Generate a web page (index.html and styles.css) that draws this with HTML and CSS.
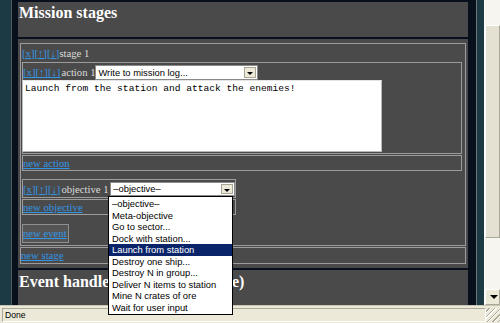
FILE: index.html
```html
<!DOCTYPE html>
<html>
<head>
    <title>Mission editor</title>
    <link rel="stylesheet" href="styles.css">
</head>
<body>
    <div class="window">
        <div class="desk">
            <div class="frame">
                <div class="panel head">
                    <h2>Mission stages</h2>
                </div>
                <div class="panel stages">
                    <div class="box stage">
                        <div class="row title"><a href="#">[x]</a><a href="#">[↑]</a><a href="#">[↓]</a>stage 1</div>
                        <div class="box action">
                            <div class="row"><a href="#">[x]</a><a href="#">[↑]</a><a href="#">[↓]</a><span class="label">action 1</span><span class="select log">Write to mission log...<span class="arrow"></span></span></div>
                            <div class="textarea">Launch from the station and attack the enemies!</div>
                        </div>
                        <div class="box bar"><a href="#">new action</a></div>
                        <div class="box objective">
                            <div class="row"><a href="#">[x]</a><a href="#">[↑]</a><a href="#">[↓]</a><span class="label">objective 1</span><span class="select goal">&ndash;objective&ndash;<span class="arrow"></span></span></div>
                        </div>
                        <div class="box bar short"><a href="#">new objective</a></div>
                        <div class="box event"><a href="#">new event</a></div>
                    </div>
                    <div class="box bar"><a href="#">new stage</a></div>
                </div>
                <div class="panel handlers">
                    <h2>Event handlers (not in any stage)</h2>
                </div>
            </div>
        </div>
        <div class="scrollbar">
            <div class="track top"></div>
            <div class="thumb"></div>
            <div class="track"></div>
            <div class="down"><span class="arrow"></span></div>
        </div>
    </div>
    <div class="status">
        <div class="status-text">Done</div>
        <div class="grip"></div>
    </div>
    <ul class="dropdown">
        <li>&ndash;objective&ndash;</li>
        <li>Meta-objective</li>
        <li>Go to sector...</li>
        <li>Dock with station...</li>
        <li class="selected">Launch from station</li>
        <li>Destroy one ship...</li>
        <li>Destroy N in group...</li>
        <li>Deliver N items to station</li>
        <li>Mine N crates of ore</li>
        <li>Wait for user input</li>
    </ul>
</body>
</html>
```

FILE: styles.css
```css
body {
    margin: 0;
    width: 500px;
    height: 323px;
    overflow: hidden;
    background-color: #ece9d8;
    font-family: "Liberation Serif", serif;
    color: #dcdcdc;
}
.window {
    display: flex;
    height: 305px;
}
.desk {
    width: 484px;
    background-color: #1c3a44;
    padding-left: 11px;
    box-sizing: border-box;
    overflow: hidden;
}
.frame {
    width: 466px;
    height: 305px;
    box-sizing: border-box;
    background-color: #08101d;
    border-left: 1px solid #4f5d63;
    border-right: 1px solid #6d767a;
    padding: 2px 8px 0 6px;
    display: flex;
    flex-direction: column;
    gap: 2px;
}
.panel {
    background-color: #4a4a4a;
}
h2 {
    margin: 0;
    font-size: 16px;
    line-height: 20px;
    font-weight: bold;
    color: #ffffff;
    padding-left: 1px;
    white-space: nowrap;
}
.head {
    height: 35px;
    box-sizing: border-box;
    padding-top: 1px;
}
.stages {
    padding: 4px 2px;
    display: flex;
    flex-direction: column;
    gap: 1px;
}
.handlers {
    flex: 1;
    padding-top: 2px;
}
.box {
    border: 1px solid #9c9c9c;
}
.stage {
    padding: 1px;
    display: flex;
    flex-direction: column;
    align-items: flex-start;
    gap: 1px;
}
a {
    color: #3196e6;
    text-decoration: underline;
}
.row {
    display: flex;
    align-items: center;
    font-size: 10.7px;
    white-space: nowrap;
}
.title {
    height: 17px;
    margin-top: -1px;
}
.label {
    margin-left: 1px;
    width: 34px;
}
.action {
    width: 440px;
    box-sizing: border-box;
    padding: 1px 0;
}
.action .row {
    height: 16px;
}
.objective {
    margin-top: 7px;
    width: 214px;
    box-sizing: border-box;
    padding: 1px 0;
}
.objective .row {
    height: 15px;
}
.objective .label {
    width: 49px;
}
.select {
    position: relative;
    display: flex;
    align-items: center;
    height: 15px;
    box-sizing: border-box;
    background-color: #ffffff;
    border: 1px solid #8a8a8a;
    color: #000000;
    font-family: "Liberation Sans", sans-serif;
    font-size: 9.4px;
    padding-left: 2px;
}
.log {
    width: 163px;
}
.goal {
    width: 125px;
    height: 14px;
}
.select .arrow {
    position: absolute;
    right: 1px;
    top: 1px;
    bottom: 1px;
    width: 12px;
    background-color: #ece9d8;
    border: 1px solid #a8a595;
    box-sizing: border-box;
}
.select .arrow::after,
.down .arrow::after {
    content: "";
    position: absolute;
    left: 2px;
    top: 4px;
    border-left: 3px solid transparent;
    border-right: 3px solid transparent;
    border-top: 3px solid #000000;
}
.textarea {
    width: 360px;
    height: 72px;
    box-sizing: border-box;
    margin-left: -1px;
    background-color: #ffffff;
    border: 1px solid #b9b9b9;
    border-top-color: #e4e4e4;
    color: #000000;
    font-family: "Liberation Mono", monospace;
    font-size: 9.6px;
    padding: 2px 2px;
}
.bar {
    width: 440px;
    box-sizing: border-box;
    height: 16px;
    font-size: 10.7px;
    line-height: 14px;
}
.stages > .bar {
    width: 446px;
    height: 17px;
    line-height: 15px;
}
.short {
    width: 214px;
}
.event {
    margin-top: 8px;
    margin-bottom: 1px;
    width: 47px;
    height: 19px;
    box-sizing: border-box;
    font-size: 10.7px;
    line-height: 15px;
    padding: 1px 0;
    border-color: #8f8f8f;
    background-color: #555555;
}
.scrollbar {
    width: 16px;
    display: flex;
    flex-direction: column;
    background-color: #f6f5f0;
    border-left: 1px solid #ffffff;
    box-sizing: border-box;
}
.track {
    flex: 1;
}
.track.top {
    flex: none;
    height: 25px;
}
.thumb {
    height: 213px;
    background-color: #e4e0d2;
    border: 1px solid #ffffff;
    border-right-color: #aca899;
    border-bottom-color: #aca899;
    box-sizing: border-box;
}
.down {
    position: relative;
    height: 16px;
    background-color: #ece9d8;
    border: 1px solid #ffffff;
    border-right-color: #aca899;
    border-bottom-color: #aca899;
    box-sizing: border-box;
}
.down .arrow::after {
    left: 4px;
    top: 5px;
    border-left-width: 4px;
    border-right-width: 4px;
    border-top-width: 4px;
}
.status {
    height: 18px;
    display: flex;
    align-items: stretch;
    border-top: 1px solid #c9c6b6;
    box-sizing: border-box;
    padding: 2px 0 1px 2px;
}
.status-text {
    flex: 1;
    border: 1px solid #ffffff;
    border-top-color: #aca899;
    border-left-color: #aca899;
    font-family: "Liberation Sans", sans-serif;
    font-size: 8.6px;
    line-height: 12px;
    color: #000000;
    padding-left: 2px;
}
.grip {
    width: 14px;
    background: repeating-linear-gradient(135deg, transparent 0 2px, #aca899 2px 3px, #ffffff 3px 4px);
}
.dropdown {
    position: absolute;
    left: 108px;
    top: 196px;
    width: 125px;
    margin: 0;
    padding: 1px 0;
    list-style: none;
    box-sizing: border-box;
    background-color: #ffffff;
    border: 1px solid #000000;
    font-family: "Liberation Sans", sans-serif;
    font-size: 9.4px;
    line-height: 11.5px;
    color: #000000;
}
.dropdown li {
    padding-left: 3px;
}
.dropdown .selected {
    background-color: #0a246a;
    color: #ffffff;
}
```
